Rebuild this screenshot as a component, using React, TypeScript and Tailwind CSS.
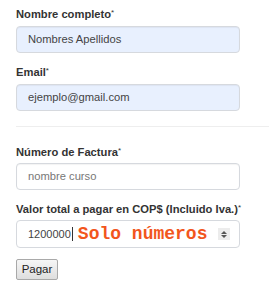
import React from "react";

const font = { fontFamily: '"Liberation Sans", Arial, sans-serif' };

function Label({ children, className = "" }: { children: React.ReactNode; className?: string }) {
  return (
    <label className={`block h-[15px] text-[11.2px] leading-[15px] font-bold text-[#333] ${className}`}>
      {children}
      <span className="relative -top-[3px] text-[8px] font-normal">*</span>
    </label>
  );
}

function Field({ value, filled, muted, className = "" }: { value: string; filled?: boolean; muted?: boolean; className?: string }) {
  return (
    <div
      className={`flex h-[27px] w-[224px] items-center rounded-[4px] border border-[#d6d9de] pl-[11px] text-[11.2px] shadow-[inset_0_1px_1px_rgba(0,0,0,0.05)] ${
        filled ? "bg-[#e8f0fe]" : "bg-white"
      } ${muted ? "text-[#777]" : "text-[#444]"} ${className}`}
    >
      {value}
    </div>
  );
}

export default function App() {
  return (
    <div className="h-[303px] w-[269px] bg-white pt-[7px]" style={font}>
      <div className="pl-4">
        <Label>Nombre completo</Label>
        <Field value="Nombres Apellidos" filled className="mt-[4px]" />

        <Label className="mt-[12px]">Email</Label>
        <Field value="ejemplo@gmail.com" filled className="mt-[4px]" />

        <div className="mt-[15px] h-px bg-[#eeeeee]" />

        <Label className="mt-[18px]">Número de Factura</Label>
        <Field value="nombre curso" muted className="mt-[3px]" />

        <Label className="mt-[12px]">Valor total a pagar en COP$ (Incluido Iva.)</Label>
        <div className="mt-[3px] flex h-[28px] w-[224px] items-center rounded-[4px] border border-[#d6d9de] bg-white pl-[11px] pr-[9px] text-[11px] text-[#444]">
          <span>1200000</span>
          <span className="ml-px h-[14px] w-px bg-[#333]" />
          <span
            className="ml-[5px] text-[18px] font-bold leading-none text-[#f2561d]"
            style={{ fontFamily: '"Liberation Mono", "Courier New", monospace' }}
          >
            Solo números
          </span>
          <span className="ml-auto flex h-[12px] w-[12px] flex-col items-center justify-center gap-px bg-[#ececec]">
            <svg width="6" height="3" viewBox="0 0 6 3">
              <path d="M0 3 L3 0 L6 3 Z" fill="#555" />
            </svg>
            <svg width="6" height="3" viewBox="0 0 6 3">
              <path d="M0 0 L3 3 L6 0 Z" fill="#555" />
            </svg>
          </span>
        </div>

        <button className="mt-[11px] h-[21px] w-[42px] rounded-[2px] border border-[#a9a9a9] bg-gradient-to-b from-[#f6f6f6] to-[#dedede] text-[11.5px] leading-[19px] text-[#222]">
          Pagar
        </button>
      </div>
    </div>
  );
}
